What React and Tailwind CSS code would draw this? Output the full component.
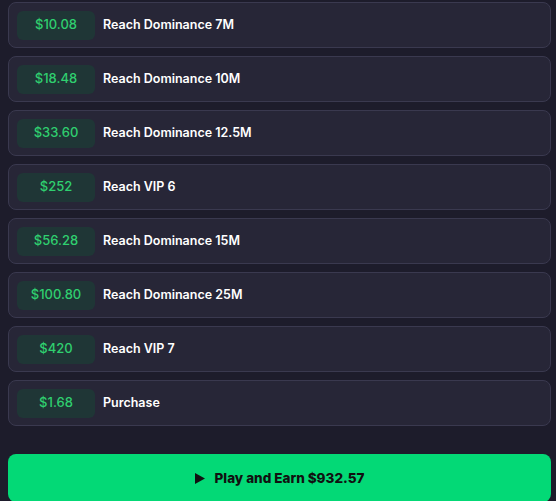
import React from 'react';

const tasks = [
    { reward: '$10.08', title: 'Reach Dominance 7M' },
    { reward: '$18.48', title: 'Reach Dominance 10M' },
    { reward: '$33.60', title: 'Reach Dominance 12.5M' },
    { reward: '$252', title: 'Reach VIP 6' },
    { reward: '$56.28', title: 'Reach Dominance 15M' },
    { reward: '$100.80', title: 'Reach Dominance 25M' },
    { reward: '$420', title: 'Reach VIP 7' },
    { reward: '$1.68', title: 'Purchase' },
];

const App = () => {
    return (
        <div className="w-[556px] h-[501px] overflow-hidden bg-[#1d1c2b] pl-2 pr-[5px] pt-0.5" style={{ fontFamily: 'Inter, "Open Sans", sans-serif' }}>
            <div className="flex flex-col gap-2">
                {tasks.map((task) => (
                    <div key={task.title} className="h-[46px] flex items-center gap-2 px-2 rounded-lg border border-[#3a394f] bg-[#272637]">
                        <div className="w-[78px] h-[29px] flex items-center justify-center rounded-md bg-[#1f3636] text-[#2fcf6f] text-[13px] font-medium">
                            {task.reward}
                        </div>
                        <span className="text-white text-[12.5px] font-semibold">{task.title}</span>
                    </div>
                ))}
            </div>
            <button className="mt-7 w-full h-12 flex items-center justify-center gap-2.5 rounded-lg bg-[#03d976] text-[#111] text-[13.5px] font-extrabold">
                <svg width="10" height="11" viewBox="0 0 10 11" fill="currentColor">
                    <path d="M0 0 L10 5.5 L0 11 Z" />
                </svg>
                <span>Play and Earn $932.57</span>
            </button>
        </div>
    );
};

export default App;
